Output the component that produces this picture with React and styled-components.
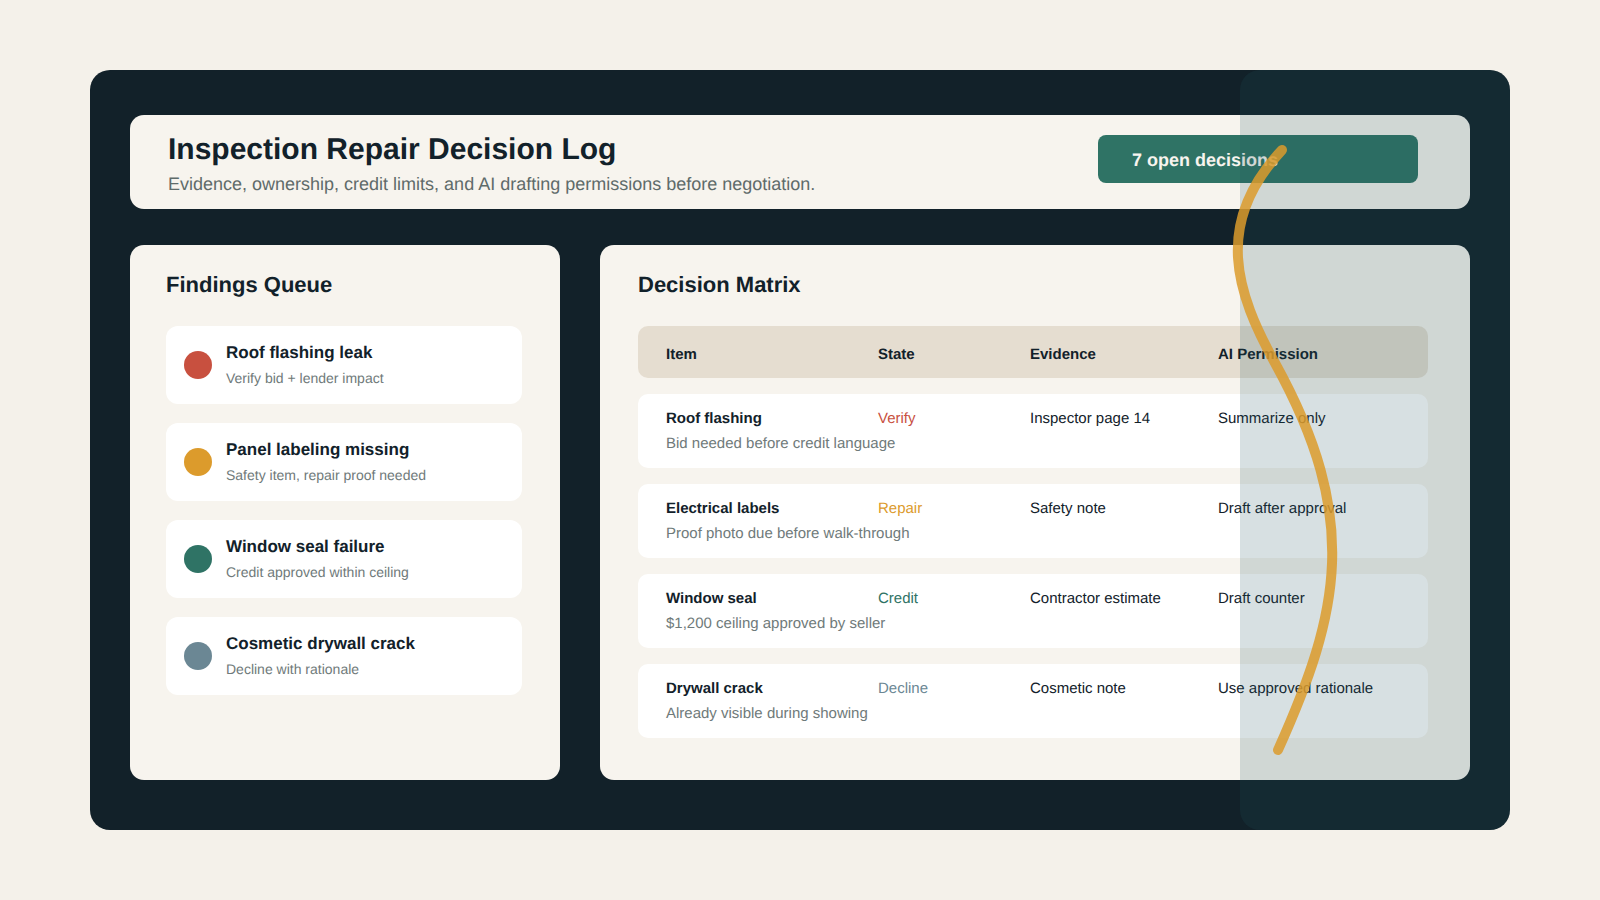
import React from "react";
import styled, { createGlobalStyle } from "styled-components";

const Global = createGlobalStyle`
  html, body { margin: 0; padding: 0; background: #f4f1ea; }
  body {
    font-family: "Liberation Sans", Arial, sans-serif;
    color: #12212a;
    text-rendering: geometricPrecision;
  }
  * { box-sizing: border-box; }
`;

const Page = styled.div`
  width: 1600px;
  height: 900px;
  padding: 70px 90px;
  overflow: hidden;
`;

const Frame = styled.div`
  position: relative;
  width: 1420px;
  height: 760px;
  padding: 45px 40px 50px;
  background: #122129;
  border-radius: 20px;
  display: flex;
  flex-direction: column;
  gap: 36px;
`;

const Header = styled.header`
  height: 94px;
  padding: 17px 52px 0 38px;
  background: #f7f4ee;
  border-radius: 14px;
  display: flex;
  justify-content: space-between;
`;

const Titles = styled.div`
  display: flex;
  flex-direction: column;
`;

const Title = styled.h1`
  margin: 0;
  font-size: 30px;
  line-height: 36px;
  font-weight: 700;
  color: #12212a;
`;

const Subtitle = styled.p`
  margin: 5px 0 0;
  font-size: 18px;
  line-height: 22px;
  color: #5f6b6a;
`;

const Badge = styled.div`
  width: 320px;
  height: 48px;
  margin-top: 3px;
  padding: 0 34px;
  border-radius: 8px;
  background: #2f7365;
  color: #f7f4ee;
  font-size: 18px;
  font-weight: 700;
  line-height: 50px;
`;

const Main = styled.div`
  display: grid;
  grid-template-columns: 430px 870px;
  gap: 40px;
  height: 535px;
`;

const Panel = styled.section`
  background: #f7f4ee;
  border-radius: 14px;
  padding: 26px ${(p) => p.$right}px 0 ${(p) => p.$left}px;
`;

const PanelTitle = styled.h2`
  margin: 0 0 28px;
  font-size: 22px;
  line-height: 27px;
  font-weight: 700;
  color: #12212a;
`;

const FindingList = styled.div`
  display: flex;
  flex-direction: column;
  gap: 19px;
`;

const Finding = styled.div`
  height: 78px;
  padding: 0 18px;
  background: #ffffff;
  border-radius: 12px;
  display: flex;
  align-items: center;
  gap: 14px;
`;

const Dot = styled.span`
  width: 28px;
  height: 28px;
  border-radius: 50%;
  background: ${(p) => p.$color};
  flex: none;
`;

const FindingText = styled.div`
  display: flex;
  flex-direction: column;
  gap: 6px;
  padding-bottom: 2px;
`;

const FindingName = styled.div`
  font-size: 17px;
  line-height: 21px;
  font-weight: 700;
  color: #12212a;
`;

const FindingNote = styled.div`
  font-size: 14px;
  line-height: 18px;
  color: #6f7a7a;
`;

const Table = styled.div`
  display: flex;
  flex-direction: column;
  gap: 16px;
`;

const Columns = styled.div`
  display: grid;
  grid-template-columns: 212px 152px 188px 1fr;
  padding: 0 28px;
  border-radius: 10px;
`;

const HeadRow = styled(Columns)`
  height: 52px;
  align-items: center;
  background: #e5ddd0;
  font-size: 15px;
  font-weight: 700;
  color: #12212a;
  padding-top: 4px;
`;

const Row = styled(Columns)`
  height: 74px;
  padding-top: 14px;
  background: #ffffff;
  align-content: start;
  font-size: 15px;
  line-height: 22px;
  color: #12212a;
`;

const Item = styled.div`
  font-weight: 700;
`;

const State = styled.div`
  color: ${(p) => p.$color};
`;

const RowNote = styled.div`
  grid-column: 1 / -1;
  margin-top: 3px;
  color: #6f7a7a;
`;

const Shade = styled.div`
  position: absolute;
  top: 0;
  right: 0;
  bottom: 0;
  width: 270px;
  border-radius: 20px;
  background: rgba(35, 85, 97, 0.18);
  pointer-events: none;
`;

const Curve = styled.svg`
  position: absolute;
  left: 0;
  top: 0;
  pointer-events: none;
`;

const findings = [
  ["#c8503f", "Roof flashing leak", "Verify bid + lender impact"],
  ["#dc9b2c", "Panel labeling missing", "Safety item, repair proof needed"],
  ["#2f7365", "Window seal failure", "Credit approved within ceiling"],
  ["#6b8794", "Cosmetic drywall crack", "Decline with rationale"],
];

const rows = [
  ["Roof flashing", "Verify", "#c8503f", "Inspector page 14", "Summarize only", "Bid needed before credit language"],
  ["Electrical labels", "Repair", "#dc9b2c", "Safety note", "Draft after approval", "Proof photo due before walk-through"],
  ["Window seal", "Credit", "#2f7365", "Contractor estimate", "Draft counter", "$1,200 ceiling approved by seller"],
  ["Drywall crack", "Decline", "#6b8794", "Cosmetic note", "Use approved rationale", "Already visible during showing"],
];

export default function App() {
  return (
    <Page>
      <Global />
      <Frame>
        <Header>
          <Titles>
            <Title>Inspection Repair Decision Log</Title>
            <Subtitle>Evidence, ownership, credit limits, and AI drafting permissions before negotiation.</Subtitle>
          </Titles>
          <Badge>7 open decisions</Badge>
        </Header>
        <Main>
          <Panel $left={36} $right={38}>
            <PanelTitle>Findings Queue</PanelTitle>
            <FindingList>
              {findings.map(([color, name, note]) => (
                <Finding key={name}>
                  <Dot $color={color} />
                  <FindingText>
                    <FindingName>{name}</FindingName>
                    <FindingNote>{note}</FindingNote>
                  </FindingText>
                </Finding>
              ))}
            </FindingList>
          </Panel>
          <Panel $left={38} $right={42}>
            <PanelTitle>Decision Matrix</PanelTitle>
            <Table>
              <HeadRow>
                <div>Item</div>
                <div>State</div>
                <div>Evidence</div>
                <div>AI Permission</div>
              </HeadRow>
              {rows.map(([item, state, color, evidence, permission, note]) => (
                <Row key={item}>
                  <Item>{item}</Item>
                  <State $color={color}>{state}</State>
                  <div>{evidence}</div>
                  <div>{permission}</div>
                  <RowNote>{note}</RowNote>
                </Row>
              ))}
            </Table>
          </Panel>
        </Main>
        <Shade />
        <Curve width="1420" height="760" viewBox="0 0 1420 760">
          <path
            d="M1192 80 C1122.6 153.8 1146.5 223.3 1185 293 C1270.8 448.4 1250.3 541.6 1188 680"
            fill="none"
            stroke="#dc9b2c"
            strokeWidth="10"
            strokeLinecap="round"
            opacity="0.85"
          />
        </Curve>
      </Frame>
    </Page>
  );
}
